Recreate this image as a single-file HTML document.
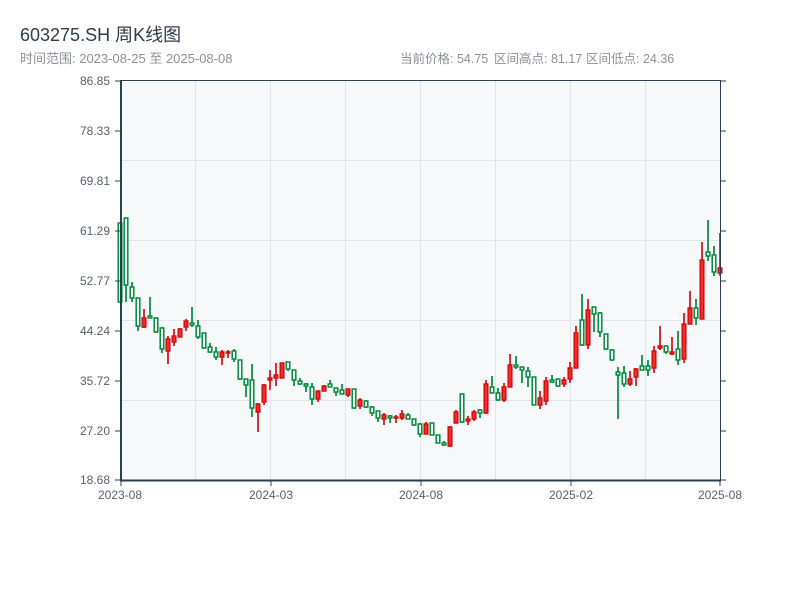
<!DOCTYPE html>
<html><head><meta charset="utf-8"><style>
body{margin:0;width:800px;height:600px;background:#fff;overflow:hidden}
svg{display:block}
text{font-family:"Liberation Sans","Noto Sans CJK SC",sans-serif}
.g{fill:#f6f8fa;stroke:#008a3a;stroke-width:1.5}
.r{fill:#f52c2c;stroke:#d20f0f;stroke-width:1.5}
</style></head><body>
<svg width="800" height="600" xmlns="http://www.w3.org/2000/svg">
<text x="20" y="41" font-size="18" fill="#2f3b4b">603275.SH 周K线图</text>
<text x="20" y="63" font-size="13" fill="#8a9099">时间范围: 2023-08-25 至 2025-08-08</text>
<g font-size="12.5" fill="#8a9099">
<text x="400" y="63">当前价格: 54.75</text>
<text x="494" y="63">区间高点: 81.17</text>
<text x="586" y="63">区间低点: 24.36</text>
</g>
<rect x="121" y="81" width="599" height="399" fill="#f6f8fa"/>
<g stroke="#e2e5ea" stroke-width="1">
<path d="M121 160.5H720M121 240.5H720M121 320.5H720M121 400.5H720"/>
<path d="M195.5 81V480M270.5 81V480M345.5 81V480M420.5 81V480M495.5 81V480M570.5 81V480M645.5 81V480"/>
</g>
<g font-size="12" fill="#555f6d" text-anchor="end">
<text x="110" y="85">86.85</text><text x="110" y="135">78.33</text><text x="110" y="185">69.81</text>
<text x="110" y="235">61.29</text><text x="110" y="285">52.77</text><text x="110" y="335">44.24</text>
<text x="110" y="385">35.72</text><text x="110" y="435">27.20</text><text x="110" y="484">18.68</text>
</g>
<g font-size="12" fill="#555f6d" text-anchor="middle">
<text x="120" y="499">2023-08</text><text x="271" y="499">2024-03</text><text x="421" y="499">2024-08</text>
<text x="571" y="499">2025-02</text><text x="720" y="499">2025-08</text>
</g>
<path stroke="#008a3a" stroke-width="1.7" fill="none" d="M120 223V302M126 218V302M132 282V302M138 298V331M150 297V318M156 317V333M162 327V353M192 307V327M198 320V339M204 333V349M210 343V353M216 347V360M234 349V362M240 360V380M246 379V397M252 364V417M288 362V371M294 370V386M300 378V385M306 383V392M312 383V405M330 380V387M336 388V396M342 384V394M354 389V409M366 400V408M372 406V416M378 411V422M390 415V423M408 413V419M414 419V426M420 423V437M432 423V435M438 435V443M444 441V446M462 394V423M480 409V418M492 376V393M498 388V401M516 356V369M522 367V383M528 367V387M534 377V405M552 375V383M558 379V387M582 294V346M594 307V332M600 312V337M606 334V350M612 349V361M618 367V419M624 366V387M642 355V370M648 360V376M666 346V354M678 331V365M696 299V325M708 220V261M714 246V276"/>
<path stroke="#d20f0f" stroke-width="1.7" fill="none" d="M144 309V328M168 336V364M174 329V346M180 328V337M186 319V331M222 350V365M228 350V358M258 403V432M264 384V405M270 370V390M276 363V386M282 363V378M318 391V402M324 385V391M348 389V397M360 398V409M384 413V425M396 415V423M402 410V420M426 422V434M450 426V447M456 410V423M468 416V425M474 410V421M486 380V414M504 383V402M510 354V387M540 391V409M546 377V405M564 377V387M570 362V383M576 326V368M588 299V349M630 371V386M636 368V386M654 346V373M660 326V350M672 337V355M684 313V363M690 291V324M702 242V319M720 233V276"/>
<g>
<rect class="g" x="118.2" y="223" width="3.6" height="79"/>
<rect class="g" x="124.2" y="218" width="3.6" height="67"/>
<rect class="g" x="130.2" y="287" width="3.6" height="11"/>
<rect class="g" x="136.2" y="298" width="3.6" height="28"/>
<rect class="r" x="142.2" y="318" width="3.6" height="9"/>
<rect class="g" x="148.2" y="316" width="3.6" height="2"/>
<rect class="g" x="154.2" y="318" width="3.6" height="14"/>
<rect class="g" x="160.2" y="328" width="3.6" height="21"/>
<rect class="r" x="166.2" y="339" width="3.6" height="12"/>
<rect class="r" x="172.2" y="336" width="3.6" height="6"/>
<rect class="r" x="178.2" y="329" width="3.6" height="8"/>
<rect class="r" x="184.2" y="321" width="3.6" height="6"/>
<rect class="g" x="190.2" y="323" width="3.6" height="2"/>
<rect class="g" x="196.2" y="326" width="3.6" height="11"/>
<rect class="g" x="202.2" y="333" width="3.6" height="15"/>
<rect class="g" x="208.2" y="347" width="3.6" height="5"/>
<rect class="g" x="214.2" y="352" width="3.6" height="5"/>
<rect class="r" x="220.2" y="352" width="3.6" height="5"/>
<rect class="r" x="226.2" y="352" width="3.6" height="1"/>
<rect class="g" x="232.2" y="351" width="3.6" height="8"/>
<rect class="g" x="238.2" y="360" width="3.6" height="19"/>
<rect class="g" x="244.2" y="379" width="3.6" height="6"/>
<rect class="g" x="250.2" y="380" width="3.6" height="28"/>
<rect class="r" x="256.2" y="404" width="3.6" height="8"/>
<rect class="r" x="262.2" y="385" width="3.6" height="17"/>
<rect class="r" x="268.2" y="378" width="3.6" height="2"/>
<rect class="r" x="274.2" y="375" width="3.6" height="3"/>
<rect class="r" x="280.2" y="363" width="3.6" height="15"/>
<rect class="g" x="286.2" y="362" width="3.6" height="7"/>
<rect class="g" x="292.2" y="370" width="3.6" height="10"/>
<rect class="g" x="298.2" y="381" width="3.6" height="3"/>
<rect class="g" x="304.2" y="384" width="3.6" height="2"/>
<rect class="g" x="310.2" y="387" width="3.6" height="12"/>
<rect class="r" x="316.2" y="391" width="3.6" height="8"/>
<rect class="r" x="322.2" y="386" width="3.6" height="5"/>
<rect class="g" x="328.2" y="384" width="3.6" height="3"/>
<rect class="g" x="334.2" y="388" width="3.6" height="4"/>
<rect class="g" x="340.2" y="390" width="3.6" height="4"/>
<rect class="r" x="346.2" y="389" width="3.6" height="6"/>
<rect class="g" x="352.2" y="389" width="3.6" height="19"/>
<rect class="r" x="358.2" y="400" width="3.6" height="6"/>
<rect class="g" x="364.2" y="401" width="3.6" height="6"/>
<rect class="g" x="370.2" y="407" width="3.6" height="6"/>
<rect class="g" x="376.2" y="411" width="3.6" height="7"/>
<rect class="r" x="382.2" y="415" width="3.6" height="4"/>
<rect class="g" x="388.2" y="416" width="3.6" height="2"/>
<rect class="r" x="394.2" y="417" width="3.6" height="1"/>
<rect class="r" x="400.2" y="414" width="3.6" height="4"/>
<rect class="g" x="406.2" y="415" width="3.6" height="4"/>
<rect class="g" x="412.2" y="419" width="3.6" height="6"/>
<rect class="g" x="418.2" y="424" width="3.6" height="10"/>
<rect class="r" x="424.2" y="424" width="3.6" height="10"/>
<rect class="g" x="430.2" y="423" width="3.6" height="12"/>
<rect class="g" x="436.2" y="435" width="3.6" height="8"/>
<rect class="g" x="442.2" y="443" width="3.6" height="2"/>
<rect class="r" x="448.2" y="427" width="3.6" height="19"/>
<rect class="r" x="454.2" y="412" width="3.6" height="11"/>
<rect class="g" x="460.2" y="394" width="3.6" height="28"/>
<rect class="r" x="466.2" y="419" width="3.6" height="2"/>
<rect class="r" x="472.2" y="412" width="3.6" height="7"/>
<rect class="g" x="478.2" y="410" width="3.6" height="3"/>
<rect class="r" x="484.2" y="384" width="3.6" height="29"/>
<rect class="g" x="490.2" y="387" width="3.6" height="6"/>
<rect class="g" x="496.2" y="393" width="3.6" height="7"/>
<rect class="r" x="502.2" y="387" width="3.6" height="13"/>
<rect class="r" x="508.2" y="365" width="3.6" height="22"/>
<rect class="g" x="514.2" y="365" width="3.6" height="2"/>
<rect class="g" x="520.2" y="367" width="3.6" height="3"/>
<rect class="g" x="526.2" y="371" width="3.6" height="6"/>
<rect class="g" x="532.2" y="377" width="3.6" height="28"/>
<rect class="r" x="538.2" y="398" width="3.6" height="7"/>
<rect class="r" x="544.2" y="381" width="3.6" height="20"/>
<rect class="g" x="550.2" y="380" width="3.6" height="2"/>
<rect class="g" x="556.2" y="379" width="3.6" height="7"/>
<rect class="r" x="562.2" y="380" width="3.6" height="4"/>
<rect class="r" x="568.2" y="368" width="3.6" height="11"/>
<rect class="r" x="574.2" y="333" width="3.6" height="35"/>
<rect class="g" x="580.2" y="320" width="3.6" height="25"/>
<rect class="r" x="586.2" y="310" width="3.6" height="35"/>
<rect class="g" x="592.2" y="307" width="3.6" height="7"/>
<rect class="g" x="598.2" y="313" width="3.6" height="19"/>
<rect class="g" x="604.2" y="334" width="3.6" height="15"/>
<rect class="g" x="610.2" y="350" width="3.6" height="10"/>
<rect class="g" x="616.2" y="372" width="3.6" height="3"/>
<rect class="g" x="622.2" y="373" width="3.6" height="11"/>
<rect class="r" x="628.2" y="379" width="3.6" height="5"/>
<rect class="r" x="634.2" y="369" width="3.6" height="8"/>
<rect class="g" x="640.2" y="366" width="3.6" height="4"/>
<rect class="g" x="646.2" y="366" width="3.6" height="4"/>
<rect class="r" x="652.2" y="351" width="3.6" height="17"/>
<rect class="r" x="658.2" y="346" width="3.6" height="2"/>
<rect class="g" x="664.2" y="346" width="3.6" height="6"/>
<rect class="r" x="670.2" y="352" width="3.6" height="2"/>
<rect class="g" x="676.2" y="349" width="3.6" height="11"/>
<rect class="r" x="682.2" y="324" width="3.6" height="35"/>
<rect class="r" x="688.2" y="308" width="3.6" height="16"/>
<rect class="g" x="694.2" y="308" width="3.6" height="10"/>
<rect class="r" x="700.2" y="260" width="3.6" height="59"/>
<rect class="g" x="706.2" y="252" width="3.6" height="4"/>
<rect class="g" x="712.2" y="255" width="3.6" height="17"/>
<rect class="r" x="718.2" y="268" width="3.6" height="5"/>
</g>
<g stroke="#2d3e50" fill="none">
<path d="M121 80.5H720" stroke-width="1"/>
<path d="M720.5 80V481" stroke-width="1"/>
<path d="M121 80V481" stroke-width="2"/>
<path d="M120 480.5H721" stroke-width="2"/>
<path d="M115 81H121M115 131H121M115 181H121M115 231H121M115 281H121M115 331H121M115 381H121M115 431H121M115 480H121" stroke-width="1"/>
<path d="M720 81H726M720 131H726M720 181H726M720 231H726M720 281H726M720 331H726M720 381H726M720 431H726M720 480H726" stroke-width="1"/>
<path d="M121 481V486M271 481V486M421 481V486M571 481V486M720 481V486" stroke-width="1"/>
</g>
</svg>
</body></html>
